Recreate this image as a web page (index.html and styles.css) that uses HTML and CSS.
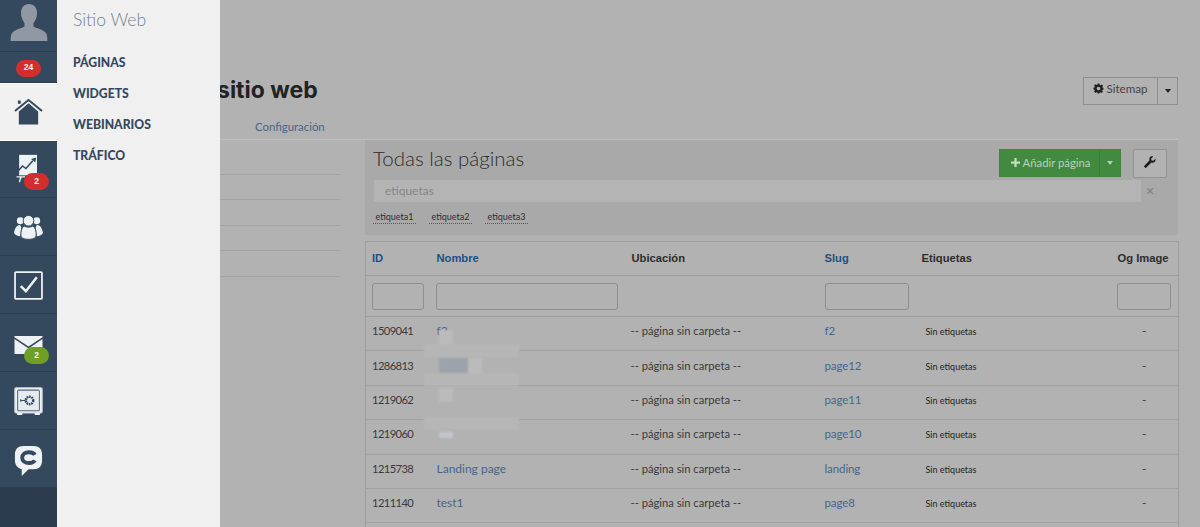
FILE: index.html
```html
<!DOCTYPE html>
<html lang="es">
<head>
<meta charset="utf-8">
<title>Sitio web</title>
<link rel="stylesheet" href="styles.css">
</head>
<body>
<div class="page">
  <header class="head">
    <h1 class="title">sitio web</h1>
    <div class="split">
      <button class="btn btn-main"><svg class="ico-gear" viewBox="0 0 24 24"><path fill-rule="evenodd" d="M10 1h4l.6 3.200 1.800.8 2.800-1.800 2.800 2.800-1.800 2.800.8 1.800L23 10.500v3.500l-2.200.6-.8 1.800 1.600 2.600-2.800 2.800-2.600-1.600-1.800.8L14 23h-4l-.6-2.200-1.800-.8-2.600 1.600-2.800-2.800 1.600-2.600-.8-1.800L1 14v-3.500l2.200-.6.8-1.800-1.800-2.600L5 2.700l2.800 1.800 1.600-.5zM12 8a4 4 0 1 0 0 8 4 4 0 0 0 0-8z"/></svg>Sitemap</button>
      <button class="btn btn-caret"><span class="caret"></span></button>
    </div>
  </header>
  <nav class="tabs"><a class="tab" href="#">Configuración</a></nav>
  <div class="columns">
    <aside class="folders">
      <div class="folder"></div>
      <div class="folder"></div>
      <div class="folder"></div>
      <div class="folder"></div>
      <div class="folder"></div>
    </aside>
    <main class="content">
      <section class="toolbar">
        <div class="toolbar-top">
          <h2 class="sub">Todas las páginas</h2>
          <div class="actions">
            <div class="split">
              <button class="gbtn gbtn-main"><svg class="ico-plus" viewBox="0 0 12 12"><path d="M4.500 0h3v4.500H12v3H7.500V12h-3V7.500H0v-3h4.500z"/></svg>Añadir página</button>
              <button class="gbtn gbtn-caret"><span class="caret caret-light"></span></button>
            </div>
            <button class="tool"><svg class="ico-wrench" viewBox="0 0 24 24"><path d="M23 5.500 18.600 9.700l-3.500-.8-.9-3.400L18.500 1c-3.500-1-6.500.4-7.500 3.200-.6 1.600-.4 3.300.2 4.500L.8 19.300c-.8 1-.8 2.100 0 2.900l1 1c.8.800 2 .8 2.900 0l10.200-10.300c1.300.6 3 .7 4.500.1C21.900 12 24 8.800 23 5.500z"/></svg></button>
          </div>
        </div>
        <div class="tagrow">
          <div class="taginput">etiquetas</div>
          <span class="clear">×</span>
        </div>
        <div class="tags">
          <span class="tag">etiqueta1</span>
          <span class="tag">etiqueta2</span>
          <span class="tag">etiqueta3</span>
        </div>
      </section>
      <table class="grid">
        <colgroup><col class="c1"><col class="c2"><col class="c3"><col class="c4"><col class="c5"><col class="c6"></colgroup>
        <thead>
          <tr class="hrow"><th class="link">ID</th><th class="link">Nombre</th><th>Ubicación</th><th class="link th-slug">Slug</th><th>Etiquetas</th><th class="right">Og Image</th></tr>
          <tr class="frow">
            <td><input class="f f1" type="text"></td><td><input class="f f2" type="text"></td><td></td>
            <td><input class="f f3" type="text"></td><td></td><td class="fend"><input class="f f4" type="text"></td>
          </tr>
        </thead>
        <tbody>
          <tr><td class="id">1509041</td><td><a href="#">f2</a></td><td class="loc">-- página sin carpeta --</td><td class="slugcell"><a class="slug" href="#">f2</a></td><td><span class="none">Sin etiquetas</span></td><td class="dash">-</td></tr>
          <tr><td class="id">1286813</td><td></td><td class="loc">-- página sin carpeta --</td><td class="slugcell"><a class="slug" href="#">page12</a></td><td><span class="none">Sin etiquetas</span></td><td class="dash">-</td></tr>
          <tr><td class="id">1219062</td><td></td><td class="loc">-- página sin carpeta --</td><td class="slugcell"><a class="slug" href="#">page11</a></td><td><span class="none">Sin etiquetas</span></td><td class="dash">-</td></tr>
          <tr><td class="id">1219060</td><td></td><td class="loc">-- página sin carpeta --</td><td class="slugcell"><a class="slug" href="#">page10</a></td><td><span class="none">Sin etiquetas</span></td><td class="dash">-</td></tr>
          <tr><td class="id">1215738</td><td><a href="#">Landing page</a></td><td class="loc">-- página sin carpeta --</td><td class="slugcell"><a class="slug" href="#">landing</a></td><td><span class="none">Sin etiquetas</span></td><td class="dash">-</td></tr>
          <tr><td class="id">1211140</td><td><a href="#">test1</a></td><td class="loc">-- página sin carpeta --</td><td class="slugcell"><a class="slug" href="#">page8</a></td><td><span class="none">Sin etiquetas</span></td><td class="dash">-</td></tr>
          <tr class="more"><td></td><td></td><td></td><td></td><td></td><td></td></tr>
        </tbody>
      </table>
    </main>
  </div>
  <div class="redact">
    <i class="band b1"></i><i class="band b2"></i><i class="band b3"></i>
    <i class="sq s1"></i><i class="sq s2"></i><i class="sq s3"></i><i class="sq s4"></i><i class="sq s5"></i>
  </div>
</div>

<nav class="rail">
  <div class="rail-item avatar">
    <svg class="ic-avatar" viewBox="0 0 38 37"><path fill="#8f98a3" d="M19 0c5 0 8 3.500 8 9 0 4-1.500 7.500-3.500 10v3.500c3 2 11 3 13 7.500.7 2 .9 4.500.9 7H.6c0-2.500.2-5 .9-7 2-4.500 10-5.500 13-7.500V19C12.500 16.500 11 13 11 9c0-5.500 3-9 8-9z"/></svg>
  </div>
  <div class="rail-item counter"><span class="badge red">24</span></div>
  <div class="rail-item active">
    <svg class="ic" viewBox="0 0 30 28"><path fill="none" stroke="#34495e" stroke-width="2" d="M1 13.500 15 2l14 11.500"/><path fill="#34495e" d="M4 6V2.500h3V6zM5 14 15 5.500 25 14v13.500H5z"/></svg>
  </div>
  <div class="rail-item tall">
    <svg class="ic" viewBox="0 0 30 34"><path fill="#eef2f4" d="M4 1h21v24H4z"/><path fill="none" stroke="#34495e" stroke-width="1.800" d="M1 22l7-8 4 3 8-9"/><path fill="#34495e" d="M18 6l6-2-1 6z"/><path fill="#eef2f4" d="M1 26h10v1.500H7L5 33H3.500l1.500-5.500H1z"/></svg>
    <span class="badge red over">2</span>
  </div>
  <div class="rail-item">
    <svg class="ic" viewBox="0 0 30 26"><g fill="#eef2f4"><circle cx="6.500" cy="6" r="3.600"/><circle cx="23.500" cy="6" r="3.600"/><path d="M6 10.500c-3 0-5 3-6 8 1 2.500 3.500 3.500 6.500 3.500l1-9c-.4-1.300-1-2.200-1.500-2.500zM24 10.500c3 0 5 3 6 8-1 2.500-3.500 3.500-6.500 3.500l-1-9c.4-1.300 1-2.200 1.500-2.500z"/></g><circle cx="15" cy="6" r="5.500" fill="#eef2f4" stroke="#34495e" stroke-width="1"/><path fill="#eef2f4" stroke="#34495e" stroke-width="1" d="M10.500 11.500C7.500 13 6.500 19 7.500 23c3 3 12 3 15 0 1-4 0-10-3-11.500-1.500 1.500-7.500 1.500-9 0z"/></svg>
  </div>
  <div class="rail-item">
    <svg class="ic" viewBox="0 0 28 28"><rect x="1" y="1" width="26" height="26" rx="1" fill="none" stroke="#eef2f4" stroke-width="1.700"/><path fill="none" stroke="#eef2f4" stroke-width="2.400" d="M6.500 14.500l5 5L22 6"/></svg>
  </div>
  <div class="rail-item">
    <svg class="ic ic-mail" viewBox="0 0 28 18"><path fill="#eef2f4" d="M0 1.200V0h28v1.200L14 10.500zM0 3v15h28V3L14 12.500z"/></svg>
    <span class="badge green-b over">2</span>
  </div>
  <div class="rail-item">
    <svg class="ic" viewBox="0 0 28 28"><rect x=".8" y=".8" width="26.400" height="24.400" rx="1.200" fill="#eef2f4" stroke="#c9d2d9" stroke-width="1"/><rect x="3.500" y="3" width="21" height="20" rx="1" fill="#e6ebee" stroke="#51677d" stroke-width="1"/><circle cx="15" cy="13" r="3.600" fill="none" stroke="#34495e" stroke-width="2.400" stroke-dasharray="1.600 .7"/><path fill="#34495e" d="M6 11.500 8.500 13 6 14.500zM8 12.500h3v1H8z"/><path fill="#eef2f4" d="M3 25h5v2H3zM20 25h5v2h-5z"/></svg>
  </div>
  <div class="rail-item">
    <svg class="ic ic-chat" viewBox="0 0 28 32"><path fill="#eef2f4" d="M9 0h10c6 0 9 3 9 9v6c0 6-3 9-9 9h-5l-7 7 0-7.200C3 23 0 20 0 15V9c0-6 3-9 9-9z"/><path fill="none" stroke="#34495e" stroke-width="4" d="M20.500 9.200C19.500 7.300 17.300 6.500 14.500 6.500c-4.300 0-7 2.200-7 5.500s2.700 5.500 7 5.500c2.800 0 5-.8 6-2.700"/></svg>
  </div>
  <div class="rail-foot"></div>
</nav>

<nav class="flyout">
  <div class="fly-title">Sitio Web</div>
  <ul class="fly-list">
    <li><a href="#">Páginas</a></li>
    <li><a href="#">Widgets</a></li>
    <li><a href="#">Webinarios</a></li>
    <li><a href="#">Tráfico</a></li>
  </ul>
</nav>
</body>
</html>
```
FILE: styles.css
```css
* { box-sizing: border-box; }
html, body { margin: 0; height: 527px; overflow: hidden; }
body { background: #b2b2b2; font-family: "Lato", "Liberation Sans", sans-serif; color: #333; position: relative; }
a { color: #47658a; text-decoration: none; }
button { font: inherit; margin: 0; }

.page { padding: 77px 22px 0 74px; height: 527px; overflow: hidden; position: relative; }
.head { display: flex; justify-content: space-between; align-items: flex-start; height: 28px; }
.title { margin: -1px 0 0 143px; font-family: "Inter", "Open Sans", sans-serif; font-size: 23px; line-height: 28px; font-weight: 700; color: #222; white-space: nowrap; }
.split { display: flex; }
.btn { height: 28px; background: #b2b2b2; border: 1px solid #8e8e8e; color: #444; font-size: 12px; }
.btn-main { width: 75px; padding: 0 0 5px; display: flex; align-items: center; justify-content: center; gap: 2px; font-family: "Lato", sans-serif; font-size: 11.600px; }
.btn-caret { width: 21px; margin-left: -1px; display: flex; align-items: center; justify-content: center; padding: 0; }
.ico-gear { width: 11px; height: 11px; fill: #222; }
.caret { display: block; width: 0; height: 0; border: 3.500px solid transparent; border-top: 4px solid #222; border-bottom: 0; }
.caret-light { border-top-color: #b9c9b9; }

.tabs { height: 35px; padding: 14px 0 0 181px; border-bottom: 1px solid #bdbdbd; }
.tab { font-size: 11.400px; line-height: 16px; display: block; }

.columns { display: flex; justify-content: space-between; }
.folders { width: 266px; padding-top: 9px; }
.folder { height: 25.500px; border-bottom: 1px solid #a3a3a3; }
.content { width: 813px; }

.toolbar { height: 95px; background: #a9a9a9; padding: 7px 11px 0 8px; }
.toolbar-top { display: flex; justify-content: space-between; align-items: flex-start; height: 33px; }
.sub { margin: 0; font-size: 20.500px; line-height: 22px; font-weight: 300; color: #2c2c2c; }
.actions { display: flex; gap: 12px; margin-top: 2px; }
.gbtn { height: 28px; background: #428a40; border: 1px solid #3c873a; color: #bcd0ba; font-size: 11.300px; font-family: "Lato", sans-serif; padding: 0; }
.gbtn-main { width: 101px; display: flex; align-items: center; justify-content: center; gap: 3px; padding: 0 0 2px 2px; }
.gbtn-caret { width: 22px; margin-left: -1px; display: flex; align-items: center; justify-content: center; border-left-color: #3d7f3a; }
.ico-plus { width: 9px; height: 9px; fill: #c9d9c6; }
.tool { width: 34px; height: 29px; background: #b2b2b2; border: 1px solid #939393; border-radius: 2px; padding: 0 0 4px; display: flex; align-items: center; justify-content: center; }
.ico-wrench { width: 12px; height: 12px; fill: #1c1c1c; }
.tagrow { display: flex; align-items: center; }
.taginput { width: 767px; height: 22px; margin-left: 1px; padding-left: 11px; background: #b4b4b4; color: #868686; font-size: 12px; line-height: 21px; }
.clear { margin-left: 5px; font-size: 14px; line-height: 18px; color: #7e7e7e; font-family: "Liberation Sans", sans-serif; }
.tags { display: flex; gap: 13px; margin-top: 9px; }
.tag { font-size: 9px; line-height: 12px; height: 13px; color: #2e2e2e; border-bottom: 1px dotted #555; padding: 0 2.500px; }

.grid { width: 813px; table-layout: fixed; border-collapse: collapse; margin-top: 6px; border: 1px solid #9c9c9c; font-size: 12px; }
.c1 { width: 64px; } .c2 { width: 195px; } .c3 { width: 194px; } .c4 { width: 96px; } .c5 { width: 196px; } .c6 { width: 68px; }
.grid th { font-family: "Liberation Sans", sans-serif; font-size: 11.200px; font-weight: 700; text-align: left; height: 34px; padding: 0 7px 2px; color: #2d2d2d; border-bottom: 1px solid #9f9f9f; white-space: nowrap; }
.grid th:first-child, .grid th.th-slug { padding-left: 6px; }
.grid th.link { color: #1f4f82; }
.grid th.right { text-align: right; padding-right: 10px; }
.frow td { height: 41px; padding: 0 6px; border-bottom: 1px solid #9f9f9f; }
.frow td.fend { padding: 0 7px 0 0; text-align: right; }
.f { display: block; height: 27px; background: #b2b2b2; border: 1px solid #8e8e8e; border-radius: 3px; padding: 0; }
.f1 { width: 52px; } .f2 { width: 182px; } .f3 { width: 84px; } .f4 { width: 54px; margin-left: auto; }
tbody td { height: 34.400px; padding: 0 7px 6px; border-bottom: 1px solid #a2a2a2; color: #3a3a3a; white-space: nowrap; }
tbody td.id { padding-left: 6px; font-size: 11.200px; letter-spacing: -.6px; }
tbody td.loc { padding-left: 6px; font-size: 11.200px; }
tbody td.slugcell { padding-left: 6px; }
.slug { font-size: 11.500px; letter-spacing: -.1px; }
.none { font-size: 9px; color: #1f1f1f; padding-left: 4px; }
tbody td.dash { text-align: center; padding-left: 0; padding-right: 0; }
.more td { height: 30px; border-bottom: 0; }

.redact { position: absolute; left: 424px; top: 328px; width: 96px; height: 112px; filter: blur(1px); }
.band { position: absolute; left: 0; width: 95px; height: 13px; background: #b6b6b6; }
.b1 { top: 16px; } .b2 { top: 45px; } .b3 { top: 89px; }
.sq { position: absolute; left: 15px; width: 14px; background: #bbb; }
.s1 { top: 2px; height: 14px; }
.s2 { top: 30px; width: 29px; height: 15px; background: #9ea2aa; }
.s3 { top: 30px; left: 44px; height: 15px; background: #bbb; }
.s4 { top: 60px; height: 14px; }
.s5 { top: 104px; height: 6px; background: #c2c6cb; }

.rail { position: absolute; left: 0; top: 0; width: 57px; height: 527px; background: #34495e; display: flex; flex-direction: column; }
.rail-item { position: relative; height: 58px; flex: none; display: flex; align-items: center; justify-content: center; border-bottom: 1px solid #2c3e50; padding-top: 2px; }
.avatar { height: 52px; padding: 0; overflow: hidden; }
.ic-avatar { width: 38px; height: 37px; margin-top: -6px; }
.counter { height: 31px; padding: 2px 0 0; border-bottom: 1px solid #2a3b4c; }
.active { height: 58px; background: #f1f1f1; border-top: 1px solid #fff; border-bottom: 1px solid #fff; padding: 0 0 2px; }
.tall { height: 57px; padding: 0 0 1px; }
.ic { width: 29px; height: 29px; }
.ic-mail { height: 18px; margin-top: 3px; }
.ic-chat { height: 31px; margin-top: 3px; }
.badge { font-family: "Liberation Sans", sans-serif; font-weight: 700; color: #f4f4f4; font-size: 8.500px; line-height: 10px; height: 17px; min-width: 25px; border-radius: 9px; display: flex; align-items: center; justify-content: center; padding-bottom: 2px; }
.red { background: #d22e2e; }
.green-b { background: #6f9f24; }
.over { position: absolute; left: 24px; bottom: 7px; }
.rail-foot { flex: 1; background: #2c3c4e; }

.flyout { position: absolute; left: 57px; top: 0; width: 163px; height: 527px; background: #f0f0f0; padding: 10px 0 0 16px; }
.fly-title { font-size: 17.500px; line-height: 20px; font-weight: 300; color: #75838f; }
.fly-list { list-style: none; margin: 24px 0 0; padding: 0; display: flex; flex-direction: column; gap: 13px; }
.fly-list a { display: block; font-size: 12.200px; line-height: 18px; font-weight: 900; color: #34495e; text-transform: uppercase; }
```
